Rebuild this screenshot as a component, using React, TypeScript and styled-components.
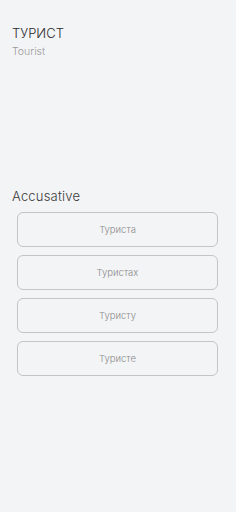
import styled, {createGlobalStyle} from "styled-components";

const GlobalStyle = createGlobalStyle`
	html, body {
		margin: 0;
		padding: 0;
		background: #f3f4f6;
		font-family: Inter, "Noto Sans", sans-serif;
	}
`;

const Page = styled.div`
	width: 236px;
	min-height: 512px;
	box-sizing: border-box;
	display: flex;
	flex-direction: column;
	padding: 25px 0 0 12px;
`;
const Word = styled.div`
	font-size: 13px;
	font-weight: 300;
	color: #2b2b2b;
	line-height: 16px;
`;
const Translation = styled.div`
	margin-top: 4px;
	font-size: 10.5px;
	font-weight: 300;
	color: #9a9a9a;
	line-height: 14px;
`;
const CaseTitle = styled.div`
	margin-top: 129px;
	font-size: 13px;
	font-weight: 300;
	color: #3a3a3a;
	line-height: 16px;
	letter-spacing: 0.2px;
`;
const Options = styled.div`
	display: flex;
	flex-direction: column;
	gap: 8px;
	margin: 8px 0 0 5px;
	width: 201px;
`;
const Option = styled.button`
	height: 35px;
	box-sizing: border-box;
	border: 1px solid #c4c4c6;
	border-radius: 6px;
	background: transparent;
	font-family: Inter, "Noto Sans", sans-serif;
	font-size: 9.5px;
	font-weight: 300;
	color: #8a8a8a;
	display: flex;
	align-items: center;
	justify-content: center;
`;

const options = ["Туриста", "Туристах", "Туристу", "Туристе"];

const App = () => {
	return (
		<>
			<GlobalStyle />
			<Page>
				<Word>ТУРИСТ</Word>
				<Translation>Tourist</Translation>
				<CaseTitle>Accusative</CaseTitle>
				<Options>
					{options.map((item) => (
						<Option key={item}>{item}</Option>
					))}
				</Options>
			</Page>
		</>
	);
};

export default App;
